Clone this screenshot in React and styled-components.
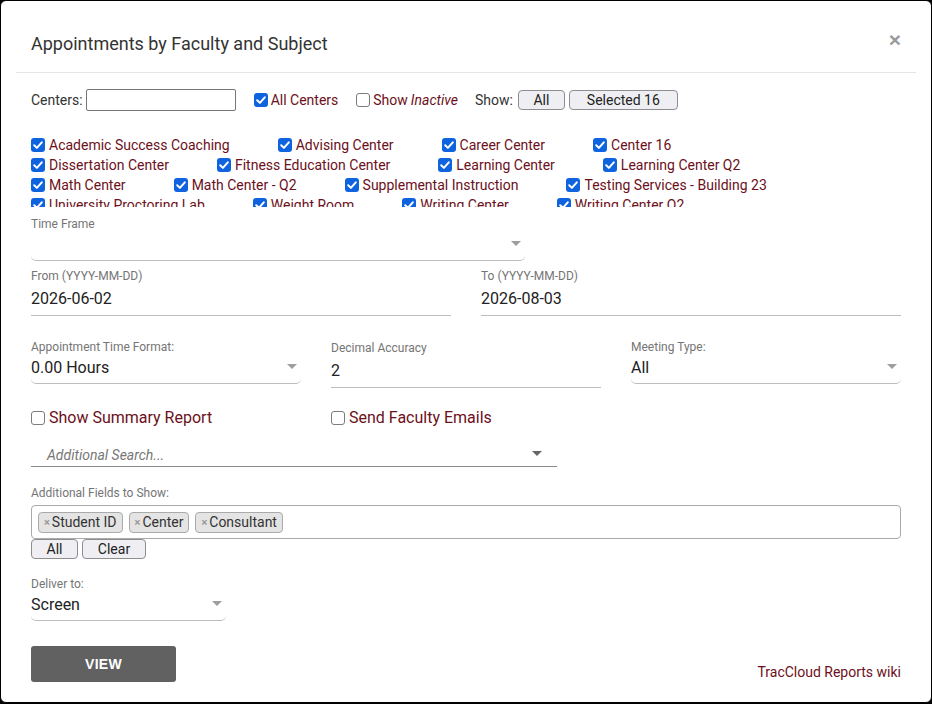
import styled, { createGlobalStyle } from 'styled-components';

const GlobalStyle = createGlobalStyle`
    html, body {
        margin: 0;
        background: #000;
    }
    * {
        box-sizing: border-box;
    }
`;

const MAROON = '#6c1020';

const Dialog = styled.div`
    width: 932px;
    height: 703px;
    background: #fff;
    border: 1px solid #000;
    border-radius: 6px;
    font-family: Roboto, "Liberation Sans", sans-serif;
    color: #333;
    display: flex;
    flex-direction: column;
`;

const Header = styled.div`
    height: 72px;
    margin: 0 15px;
    padding: 32px 15px 0;
    border-bottom: 1px solid #e5e5e5;
    display: flex;
    justify-content: space-between;
    align-items: flex-start;
`;

const Title = styled.h4`
    margin: 0;
    font-size: 18px;
    line-height: 22px;
    font-weight: 400;
    color: #333;
`;

const Close = styled.button`
    border: none;
    background: none;
    padding: 0;
    margin-top: -4px;
    font-family: "Liberation Sans", sans-serif;
    font-size: 21px;
    line-height: 22px;
    font-weight: 700;
    color: #9a9a9a;
    cursor: pointer;
`;

const Body = styled.div`
    padding: 0 30px;
    display: flex;
    flex-direction: column;
`;

const CentersRow = styled.div`
    margin-top: 16px;
    height: 22px;
    display: flex;
    align-items: center;
    font-size: 14px;
`;

const TextInput = styled.input`
    width: 150px;
    height: 22px;
    margin-left: 3px;
    border: 1px solid #767676;
    border-radius: 2px;
    outline: none;
`;

const Check = styled.label`
    display: inline-flex;
    align-items: center;
    gap: ${p => p.$gap || 4}px;
    margin-left: ${p => p.$ml || 0}px;
    font-size: ${p => p.$size || 14}px;
    line-height: 20px;
    color: ${MAROON};
    white-space: nowrap;
    cursor: pointer;

    em {
        font-style: italic;
    }
`;

const EmptyBox = styled.span`
    width: 14px;
    height: 14px;
    border: 1px solid #7c7c7c;
    border-radius: 3px;
    background: #fff;
    flex-shrink: 0;
`;

const Plain = styled.span`
    margin-left: ${p => p.$ml || 0}px;
    color: #333;
`;

const SmallButton = styled.button`
    width: ${p => p.$w}px;
    height: 20px;
    margin-left: ${p => p.$ml || 0}px;
    padding: 0;
    border: 1px solid #8d8d92;
    border-radius: 4px;
    background: #efeff3;
    font-family: Roboto, "Liberation Sans", sans-serif;
    font-size: 14px;
    color: #222;
    cursor: pointer;
`;

const CenterList = styled.div`
    margin-top: 24px;
    height: 72px;
    overflow: hidden;
    display: flex;
    flex-direction: column;
`;

const CenterRow = styled.div`
    display: flex;
    gap: 48px;
    height: 20px;
`;

const Field = styled.div`
    display: flex;
    flex-direction: column;
    margin-top: ${p => p.$mt || 0}px;
    width: ${p => p.$w || 'auto'};
`;

const Label = styled.div`
    font-size: 12px;
    line-height: 14px;
    color: #757575;
`;

const Select = styled.div`
    height: 30px;
    padding: 4px 4px 5px 0;
    border-bottom: 1px solid #bdbdbd;
    border-radius: 0 0 5px 5px;
    display: flex;
    align-items: center;
    justify-content: space-between;
    font-size: 16px;
    line-height: 20px;
    color: #222;
`;

const Arrow = styled.span`
    width: 0;
    height: 0;
    border-left: ${p => p.$size || 5}px solid transparent;
    border-right: ${p => p.$size || 5}px solid transparent;
    border-top: ${p => p.$size || 5}px solid ${p => p.$color || '#9e9e9e'};
    transform: translateY(-2px);
`;

const DateInput = styled.div`
    height: 33px;
    padding: 6px 0;
    border-bottom: 1px solid #bdbdbd;
    font-size: 16px;
    line-height: 20px;
    color: #222;
`;

const Grid = styled.div`
    display: grid;
    grid-template-columns: repeat(${p => p.$cols}, 1fr);
    column-gap: 30px;
    align-items: start;
    margin-top: ${p => p.$mt || 0}px;
`;

const SearchBox = styled.div`
    width: 526px;
    height: 25px;
    margin-top: 14px;
    padding: 2px 15px 0 16px;
    border-bottom: 1px solid #8a8a8a;
    display: flex;
    align-items: center;
    justify-content: space-between;
    font-size: 14px;
    font-style: italic;
    color: #777;
`;

const MultiBox = styled.div`
    margin-top: 5px;
    height: 34px;
    padding: 0 6px;
    border: 1px solid #aaa;
    border-radius: 4px;
    display: flex;
    align-items: center;
    gap: 6px;
`;

const Tag = styled.span`
    height: 21px;
    padding: 0 5px 0 5px;
    background: #e4e4e4;
    border: 1px solid #aaa;
    border-radius: 4px;
    display: inline-flex;
    align-items: center;
    gap: 2px;
    font-size: 14px;
    color: #333;

    b {
        font-size: 11px;
        font-weight: 700;
        color: #999;
    }
`;

const ButtonRow = styled.div`
    display: flex;
    gap: 4px;
`;

const Footer = styled.div`
    margin-top: 25px;
    display: flex;
    justify-content: space-between;
    align-items: flex-end;
`;

const ViewButton = styled.button`
    width: 145px;
    height: 36px;
    border: none;
    border-radius: 3px;
    background: #616161;
    color: #fff;
    font-family: "Liberation Sans", sans-serif;
    font-weight: 700;
    font-size: 14px;
    letter-spacing: 0.3px;
    cursor: pointer;
`;

const WikiLink = styled.a`
    font-size: 14px;
    line-height: 20px;
    color: ${MAROON};
    text-decoration: none;
`;

const CheckedBox = () => (
    <svg width="14" height="14" viewBox="0 0 14 14" style={{ flexShrink: 0 }}>
        <rect x="0" y="0" width="14" height="14" rx="3" fill="#0f63de" />
        <path d="M3.2 7.3 L5.9 9.9 L10.8 4.3" stroke="#fff" strokeWidth="2" fill="none" strokeLinecap="round" strokeLinejoin="round" />
    </svg>
);

const centerRows = [
    ['Academic Success Coaching', 'Advising Center', 'Career Center', 'Center 16'],
    ['Dissertation Center', 'Fitness Education Center', 'Learning Center', 'Learning Center Q2'],
    ['Math Center', 'Math Center - Q2', 'Supplemental Instruction', 'Testing Services - Building 23'],
    ['University Proctoring Lab', 'Weight Room', 'Writing Center', 'Writing Center Q2'],
];

const tags = ['Student ID', 'Center', 'Consultant'];

const App = () => {
    return (
        <Dialog>
            <GlobalStyle />
            <Header>
                <Title>Appointments by Faculty and Subject</Title>
                <Close>×</Close>
            </Header>
            <Body>
                <CentersRow>
                    <Plain>Centers:</Plain>
                    <TextInput />
                    <Check $ml={18} $gap={3}><CheckedBox />All Centers</Check>
                    <Check $ml={18} $gap={3}><EmptyBox />Show <em>Inactive</em></Check>
                    <Plain $ml={17}>Show:</Plain>
                    <SmallButton $w={47} $ml={5}>All</SmallButton>
                    <SmallButton $w={109} $ml={4}>Selected 16</SmallButton>
                </CentersRow>

                <CenterList>
                    {centerRows.map((row, i) => (
                        <CenterRow key={i}>
                            {row.map(name => (
                                <Check key={name}><CheckedBox />{name}</Check>
                            ))}
                        </CenterRow>
                    ))}
                </CenterList>

                <Field $mt={10} $w="494px">
                    <Label>Time Frame</Label>
                    <Select><span></span><Arrow /></Select>
                </Field>

                <Grid $cols={2} $mt={8}>
                    <Field>
                        <Label>From (YYYY-MM-DD)</Label>
                        <DateInput>2026-06-02</DateInput>
                    </Field>
                    <Field>
                        <Label>To (YYYY-MM-DD)</Label>
                        <DateInput>2026-08-03</DateInput>
                    </Field>
                </Grid>

                <Grid $cols={3} $mt={24}>
                    <Field>
                        <Label>Appointment Time Format:</Label>
                        <Select>0.00 Hours<Arrow /></Select>
                    </Field>
                    <Field $mt={1}>
                        <Label>Decimal Accuracy</Label>
                        <DateInput>2</DateInput>
                    </Field>
                    <Field>
                        <Label>Meeting Type:</Label>
                        <Select>All<Arrow /></Select>
                    </Field>
                </Grid>

                <Grid $cols={3} $mt={20}>
                    <Check $size={16}><EmptyBox />Show Summary Report</Check>
                    <Check $size={16}><EmptyBox />Send Faculty Emails</Check>
                </Grid>

                <SearchBox>
                    Additional Search...
                    <Arrow $color="#666" />
                </SearchBox>

                <Field $mt={19}>
                    <Label>Additional Fields to Show:</Label>
                    <MultiBox>
                        {tags.map(t => (
                            <Tag key={t}><b>×</b>{t}</Tag>
                        ))}
                    </MultiBox>
                </Field>
                <ButtonRow>
                    <SmallButton $w={47}>All</SmallButton>
                    <SmallButton $w={64}>Clear</SmallButton>
                </ButtonRow>

                <Field $mt={18} $w="195px">
                    <Label>Deliver to:</Label>
                    <Select>Screen<Arrow /></Select>
                </Field>

                <Footer>
                    <ViewButton>VIEW</ViewButton>
                    <WikiLink href="#">TracCloud Reports wiki</WikiLink>
                </Footer>
            </Body>
        </Dialog>
    );
};

export default App;
